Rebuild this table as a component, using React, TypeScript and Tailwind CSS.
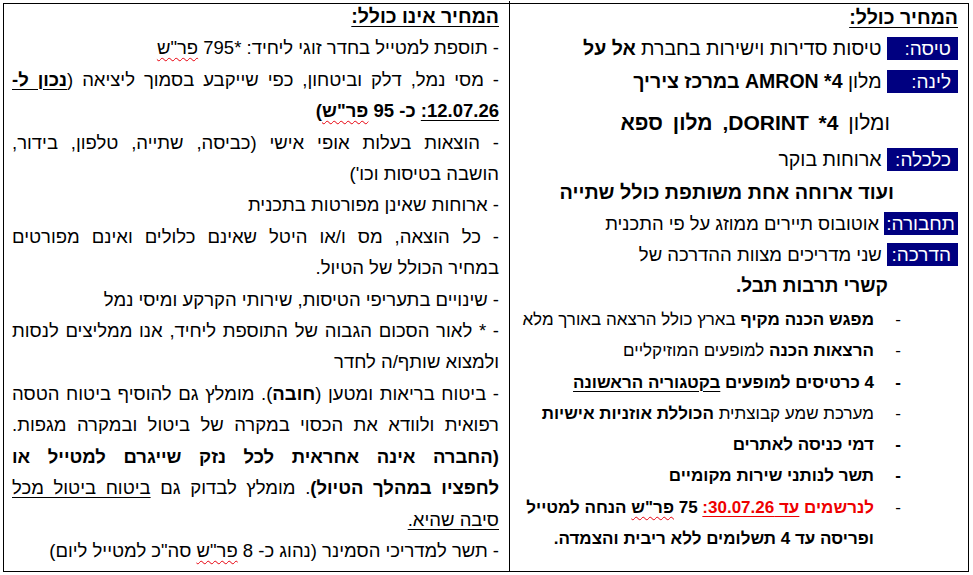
import React from "react";

function Label({ children }: { children: React.ReactNode }) {
  return (
    <span className="inline-block min-w-[71px] bg-[#000080] text-white text-[19px] leading-[23px] pr-[7px] pl-[3px]">
      {children}
    </span>
  );
}

function Wavy({ children }: { children: React.ReactNode }) {
  return (
    <span className="underline decoration-wavy decoration-red-600 [text-decoration-thickness:1px] underline-offset-[3px]">
      {children}
    </span>
  );
}

function Bullet({ children, boldDash }: { children: React.ReactNode; boldDash?: boolean }) {
  return (
    <div className="flex pr-[57px] whitespace-nowrap">
      <span className={"w-[27px] shrink-0" + (boldDash ? " font-bold" : "")}>-</span>
      <span>{children}</span>
    </div>
  );
}

const U = "underline [text-decoration-thickness:1px] underline-offset-[3px]";
const J = "text-justify [text-align-last:justify] whitespace-nowrap";

export default function App() {
  return (
    <div className="w-[973px] h-[575px] bg-white pt-[3px] pl-[3px]">
      <div
        dir="rtl"
        className="flex w-[966px] h-[569px] border border-black text-black font-['Liberation_Sans',Arial,sans-serif]"
      >
        {/* המחיר כולל */}
        <div className="w-[458px] shrink-0 pr-[10px] leading-[31px] -mt-[2px] overflow-hidden">
          <div className={"text-[19.5px] font-bold " + U}>המחיר כולל:</div>
          <div className="whitespace-nowrap text-[19.5px]">
            <Label>טיסה:</Label> טיסות סדירות וישירות בחברת <b>אל על</b>
          </div>
          <div className="whitespace-nowrap mt-[2px] text-[19.5px]">
            <Label>לינה:</Label> מלון <b>AMRON *4 במרכז ציריך</b>
          </div>
          <div className="whitespace-nowrap pr-[68px] mt-[10px] text-[21px] [word-spacing:4px]">
            ומלון <b>DORINT *4, מלון ספא</b>
          </div>
          <div className="whitespace-nowrap mt-[6px] text-[19.5px]">
            <Label>כלכלה:</Label> ארוחות בוקר
          </div>
          <div className="whitespace-nowrap pr-[64px] mt-[2px] font-bold text-[19.8px]">
            ועוד ארוחה אחת משותפת כולל שתייה
          </div>
          <div className="whitespace-nowrap text-[18.4px]">
            <span className="inline-block bg-[#000080] text-white text-[19px] leading-[23px] pr-[3px] pl-[2px]">
              תחבורה:
            </span>{" "}
            אוטובוס תיירים ממוזג על פי התכנית
          </div>
          <div className="whitespace-nowrap text-[18.5px]">
            <Label>הדרכה:</Label> שני מדריכים מצוות ההדרכה של
          </div>
          <div className="whitespace-nowrap pr-[70px] font-bold text-[19px]">קשרי תרבות תבל.</div>
          <div className="mt-[3px] text-[17px] leading-[31.3px]">
            <Bullet>
              <b>מפגש הכנה מקיף</b> בארץ כולל הרצאה באורך מלא
            </Bullet>
            <Bullet>
              <b>הרצאות הכנה</b> למופעים המוזיקליים
            </Bullet>
            <Bullet boldDash>
              <b>
                4 כרטיסים למופעים <span className={U}>בקטגוריה הראשונה</span>
              </b>
            </Bullet>
            <Bullet>
              מערכת שמע קבוצתית <b>הכוללת אוזניות אישיות</b>
            </Bullet>
            <Bullet boldDash>
              <b>דמי כניסה לאתרים</b>
            </Bullet>
            <Bullet boldDash>
              <b>תשר לנותני שירות מקומיים</b>
            </Bullet>
            <Bullet>
              <b>
                <span className="text-[#ee0000]">
                  לנרשמים <span className={U}>עד 30.07.26:</span>
                </span>{" "}
                75 <Wavy>פר"ש</Wavy> הנחה למטייל
              </b>
            </Bullet>
            <div className="pr-[84px] whitespace-nowrap font-bold">ופריסה עד 4 תשלומים ללא ריבית והצמדה.</div>
          </div>
        </div>

        {/* המחיר אינו כולל */}
        <div className="flex-1 border-r border-black pr-[10px] pl-[8px] text-[18.5px] leading-[31.4px] -mt-[3px]">
          <div className={"text-[19.5px] font-bold " + U}>המחיר אינו כולל:</div>
          <div className="whitespace-nowrap">
            - תוספת למטייל בחדר זוגי ליחיד: *795 <Wavy>פר"ש</Wavy>
          </div>
          <div className={J}>
            - מסי נמל, דלק וביטחון, כפי שייקבע בסמוך ליציאה (<b className={U}>נכון ל-</b>
          </div>
          <div className="whitespace-nowrap font-bold">
            <span className={U}>12.07.26:</span> כ- 95 <Wavy>פר"ש</Wavy>)
          </div>
          <div className={J}>- הוצאות בעלות אופי אישי (כביסה, שתייה, טלפון, בידור,</div>
          <div className="whitespace-nowrap">הושבה בטיסות וכו')</div>
          <div className="whitespace-nowrap">- ארוחות שאינן מפורטות בתכנית</div>
          <div className={J}>- כל הוצאה, מס ו/או היטל שאינם כלולים ואינם מפורטים</div>
          <div className="whitespace-nowrap">במחיר הכולל של הטיול.</div>
          <div className="whitespace-nowrap">- שינויים בתעריפי הטיסות, שירותי הקרקע ומיסי נמל</div>
          <div className={J}>- * לאור הסכום הגבוה של התוספת ליחיד, אנו ממליצים לנסות</div>
          <div className="whitespace-nowrap">ולמצוא שותף/ה לחדר</div>
          <div className={J}>
            - ביטוח בריאות ומטען (<b>חובה</b>). מומלץ גם להוסיף ביטוח הטסה
          </div>
          <div className={J}>רפואית ולוודא את הכסוי במקרה של ביטול ובמקרה מגפות.</div>
          <div className={J + " font-bold"}>(החברה אינה אחראית לכל נזק שייגרם למטייל או</div>
          <div className={J}>
            <b>לחפציו במהלך הטיול)</b>. מומלץ לבדוק גם <span className={U}>ביטוח ביטול מכל</span>
          </div>
          <div className="whitespace-nowrap">
            <span className={U}>סיבה שהיא.</span>
          </div>
          <div className="whitespace-nowrap">
            - תשר למדריכי הסמינר (נהוג כ- 8 <Wavy>פר"ש</Wavy> סה"כ למטייל ליום)
          </div>
        </div>
      </div>
    </div>
  );
}
